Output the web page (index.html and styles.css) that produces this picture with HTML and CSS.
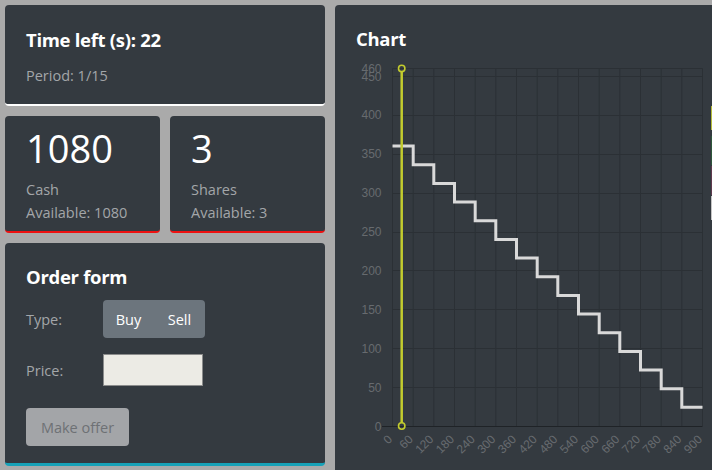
FILE: index.html
```html
<!DOCTYPE html>
<html lang="en">
<head>
<meta charset="utf-8">
<title>Market</title>
<link rel="stylesheet" href="styles.css">
</head>
<body>
<div class="page">
  <div class="left">
    <div class="card card-time">
      <h2 class="title">Time left (s): 22</h2>
      <div class="muted period">Period: 1/15</div>
    </div>
    <div class="stats">
      <div class="card card-stat">
        <div class="big">1080</div>
        <div class="muted">Cash</div>
        <div class="muted">Available: 1080</div>
      </div>
      <div class="card card-stat">
        <div class="big">3</div>
        <div class="muted">Shares</div>
        <div class="muted">Available: 3</div>
      </div>
    </div>
    <div class="card card-order">
      <h2 class="title">Order form</h2>
      <div class="row row-type">
        <span class="muted label">Type:</span>
        <div class="btn-group">
          <span class="btn-seg">Buy</span>
          <span class="btn-seg">Sell</span>
        </div>
      </div>
      <div class="row row-price">
        <span class="muted label">Price:</span>
        <span class="input"></span>
      </div>
      <span class="btn-offer">Make offer</span>
    </div>
  </div>
  <div class="card card-chart">
    <h2 class="title chart-title">Chart</h2>
    <svg class="chart" width="400" height="410" viewBox="0 0 400 410" xmlns="http://www.w3.org/2000/svg">
      <g stroke="#2b3035" stroke-width="1" fill="none">
        <path d="M57.5 13.5V371 M78.2 13.5V371 M98.8 13.5V371 M119.5 13.5V371 M140.2 13.5V371 M160.8 13.5V371 M181.5 13.5V371 M202.2 13.5V371 M222.8 13.5V371 M243.5 13.5V371 M264.2 13.5V371 M284.8 13.5V371 M305.5 13.5V371 M326.2 13.5V371 M346.8 13.5V371 M367.5 13.5V371"/>
        <path d="M57.5 13.5H367.5 M57.5 21.5H367.5 M57.5 60.5H367.5 M57.5 99.5H367.5 M57.5 138.5H367.5 M57.5 177.5H367.5 M57.5 215.5H367.5 M57.5 254.5H367.5 M57.5 293.5H367.5 M57.5 332.5H367.5"/>
      </g>
      <path d="M47 371.5H367.5" stroke="#1f2327" stroke-width="1"/>
      <g font-family="Liberation Sans, Arial, sans-serif" font-size="12" fill="#676b6f" text-anchor="end">
        <text x="46.5" y="375.5">0</text>
        <text x="46.5" y="336.5">50</text>
        <text x="46.5" y="297.5">100</text>
        <text x="46.5" y="258.5">150</text>
        <text x="46.5" y="219.5">200</text>
        <text x="46.5" y="180.5">250</text>
        <text x="46.5" y="141.5">300</text>
        <text x="46.5" y="103">350</text>
        <text x="46.5" y="64">400</text>
        <text x="46.5" y="25.5">450</text>
        <text x="46.5" y="17.5">460</text>
      </g>
      <g font-family="Liberation Sans, Arial, sans-serif" font-size="12" fill="#676b6f" text-anchor="end">
        <text transform="translate(58 385) rotate(-45)">0</text>
        <text transform="translate(78.7 385) rotate(-45)">60</text>
        <text transform="translate(99.3 385) rotate(-45)">120</text>
        <text transform="translate(120 385) rotate(-45)">180</text>
        <text transform="translate(140.7 385) rotate(-45)">240</text>
        <text transform="translate(161.3 385) rotate(-45)">300</text>
        <text transform="translate(182 385) rotate(-45)">360</text>
        <text transform="translate(202.7 385) rotate(-45)">420</text>
        <text transform="translate(223.3 385) rotate(-45)">480</text>
        <text transform="translate(244 385) rotate(-45)">540</text>
        <text transform="translate(264.7 385) rotate(-45)">600</text>
        <text transform="translate(285.3 385) rotate(-45)">660</text>
        <text transform="translate(306 385) rotate(-45)">720</text>
        <text transform="translate(326.7 385) rotate(-45)">780</text>
        <text transform="translate(347.3 385) rotate(-45)">840</text>
        <text transform="translate(368 385) rotate(-45)">900</text>
      </g>
      <path d="M57.5 91.1H78.2V109.8H98.8V128.4H119.5V147.1H140.2V165.7H160.8V184.4H181.5V203.1H202.2V221.7H222.8V240.4H243.5V259H264.2V277.7H284.8V296.4H305.5V315H326.2V333.7H346.8V352.3H367.5" fill="none" stroke="#d9d9d9" stroke-width="3"/>
      <path d="M66.7 16.5V368" stroke="#c3cc2e" stroke-width="2.5"/>
      <circle cx="66.7" cy="13.4" r="3.2" fill="none" stroke="#c3cc2e" stroke-width="1.6"/>
      <circle cx="66.7" cy="371" r="3.2" fill="none" stroke="#c3cc2e" stroke-width="1.6"/>
      <rect x="376" y="51" width="20" height="24" fill="#b6bd3a"/>
      <rect x="376" y="81" width="20" height="29" fill="#2f573c"/>
      <rect x="376" y="111" width="20" height="29" fill="#5e3a4d"/>
      <rect x="376" y="141" width="20" height="24" fill="#c4c4c4"/>
    </svg>
  </div>
</div>
</body>
</html>
```

FILE: styles.css
```css
html, body {
  margin: 0;
  padding: 0;
}
body {
  background: #aaaaaa;
  font-family: "Open Sans", "Noto Sans", sans-serif;
  color: #ffffff;
  overflow: hidden;
  width: 712px;
  height: 470px;
}
.page {
  display: flex;
  gap: 10px;
  padding: 5px;
  align-items: flex-start;
  width: 712px;
  height: 470px;
  box-sizing: border-box;
  overflow: hidden;
}
.left {
  width: 320px;
  flex: none;
  display: flex;
  flex-direction: column;
  gap: 10px;
}
.card {
  background: #343a40;
  border-radius: 4px;
  box-sizing: border-box;
}
.title {
  margin: 0;
  font-size: 18.5px;
  letter-spacing: -0.3px;
  font-weight: 700;
  line-height: 24px;
  color: #ffffff;
}
.muted {
  color: #a3a6a9;
  font-size: 14.5px;
  line-height: 23px;
}
.card-time {
  height: 101px;
  padding: 23px 21px 0;
  border-bottom: 2px solid #ffffff;
}
.period {
  margin-top: 12px;
}
.stats {
  display: flex;
  gap: 10px;
}
.card-stat {
  flex: 1;
  height: 117px;
  padding: 9px 21px 0;
  border-bottom: 2px solid #ee1111;
}
.big {
  font-size: 38px;
  line-height: 46px;
  font-weight: 400;
  color: #ffffff;
  margin-bottom: 7px;
}
.card-order {
  height: 223px;
  padding: 22px 21px 0;
  border-bottom: 3px solid #17a2b8;
}
.row {
  display: flex;
  align-items: center;
}
.label {
  width: 77px;
  flex: none;
}
.row-type {
  margin-top: 11px;
}
.btn-group {
  display: flex;
  background: #6c757d;
  border-radius: 4px;
  height: 38px;
  width: 102px;
  align-items: center;
}
.btn-seg {
  flex: 1;
  text-align: center;
  font-size: 14.5px;
  color: #ffffff;
}
.row-price {
  margin-top: 16px;
}
.input {
  display: block;
  width: 100px;
  height: 32px;
  box-sizing: border-box;
  background: #ecebe5;
  border: 1px solid #8b8c8c;
}
.btn-offer {
  display: flex;
  align-items: center;
  justify-content: center;
  margin-top: 22px;
  width: 103px;
  height: 38px;
  border-radius: 4px;
  background: #a3a5a8;
  color: #6e7175;
  font-size: 14.5px;
}
.card-chart {
  flex: none;
  width: 420px;
  height: 480px;
  padding: 22px 21px 0;
  overflow: hidden;
}
.chart {
  display: block;
  margin: 0 0 0 -21px;
}
.chart-title {
  margin-bottom: 4px;
  height: 24px;
}
```
